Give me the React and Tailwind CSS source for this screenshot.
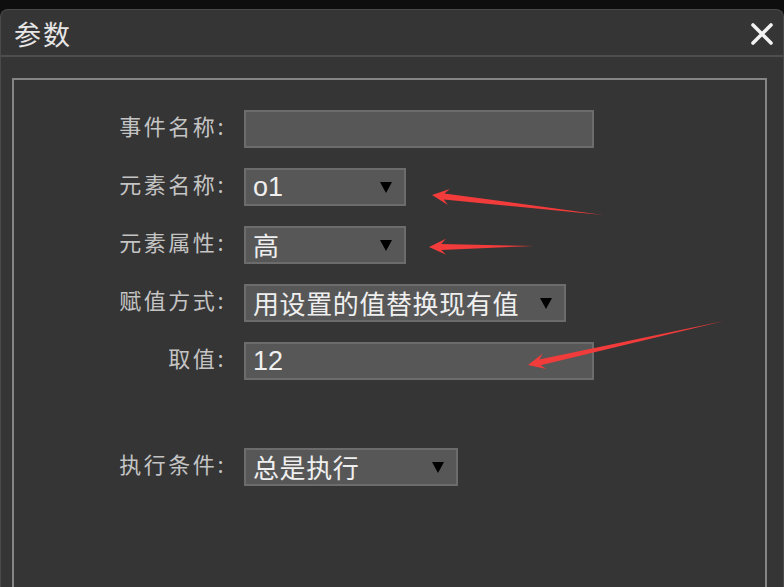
import React from 'react';

const cjk = { fontFamily: '"Noto Sans CJK SC", "Noto Sans", sans-serif' };
const latin = { fontFamily: '"Liberation Sans", "Noto Sans CJK SC", sans-serif' };

// red annotation arrows: tip -> tail
const arrows = [
  { tip: [432, 195], tail: [603, 215] },
  { tip: [429, 247], tail: [534, 246] },
  { tip: [528, 365], tail: [724, 321] },
];

const arrowPoints = ({ tip, tail }) => {
  const dx = tail[0] - tip[0];
  const dy = tail[1] - tip[1];
  const len = Math.hypot(dx, dy);
  const ux = dx / len, uy = dy / len;
  const nx = -uy, ny = ux;
  const L = 17, W = 8, s = 3;
  const p = (a, b) => `${tip[0] + ux * a + nx * b},${tip[1] + uy * a + ny * b}`;
  return [
    `${tip[0]},${tip[1]}`,
    p(L, W),
    p(L * 0.72, s),
    `${tail[0]},${tail[1]}`,
    p(L * 0.72, -s),
    p(L, -W),
  ].join(' ');
};

const Arrow = () => (
  <svg width="12" height="12" viewBox="0 0 12 12" className="shrink-0">
    <polygon points="0,1 12,1 6,12" fill="#000" />
  </svg>
);

const Row = ({ label, children, className = '' }) => (
  <div className={`flex items-start ${className}`}>
    <div
      className="w-[212px] whitespace-nowrap text-right text-[22px] leading-[30px] tracking-[2.5px] text-[#c4c4c4]"
      style={cjk}
    >
      {label}:
    </div>
    <div className="ml-[18px]">{children}</div>
  </div>
);

const Field = ({ width, children, select, latinText }) => (
  <div
    className="h-[38px] flex items-center justify-between border-2 border-[#6c6c6c] bg-[#575757] pl-[7px] pr-[12px] text-[#efefef]"
    style={{ width }}
  >
    <span
      className={
        latinText
          ? 'whitespace-nowrap text-[27px] leading-none'
          : 'whitespace-nowrap text-[26px] leading-none tracking-[0.6px]'
      }
      style={latinText ? latin : cjk}
    >
      {children}
    </span>
    {select && <Arrow />}
  </div>
);

export default function App() {
  return (
    <div className="relative h-[587px] w-[784px] overflow-hidden bg-[#0e0e0e] pt-[9px]">
      <div className="flex h-[578px] flex-col rounded-t-[8px] border border-b-0 border-[#4a4a4a] bg-[#353535]">
        <div className="flex h-[47px] shrink-0 items-center justify-between border-b-2 border-[#4e4e4e] pl-[13px] pr-[9px] pt-[3px]">
          <span className="text-[27px] tracking-[2px] text-[#e6e6e6]" style={cjk}>
            参数
          </span>
          <svg width="24" height="24" viewBox="0 0 24 24">
            <path d="M3 3 L21 21 M21 3 L3 21" stroke="#f2f2f2" strokeWidth="3.6" strokeLinecap="round" />
          </svg>
        </div>
        <div className="flex-1 pl-[11px] pr-[16px] pt-[21px]">
          <div className="h-full border-x-2 border-t-2 border-[#858585] pt-[30px]">
            <div className="flex flex-col gap-[20px]">
              <Row label="事件名称">
                <Field width="350px" />
              </Row>
              <Row label="元素名称">
                <Field width="162px" select latinText>o1</Field>
              </Row>
              <Row label="元素属性">
                <Field width="162px" select>高</Field>
              </Row>
              <Row label="赋值方式">
                <Field width="322px" select>用设置的值替换现有值</Field>
              </Row>
              <Row label="取值">
                <Field width="350px" latinText>12</Field>
              </Row>
              <Row label="执行条件" className="mt-[48px]">
                <Field width="214px" select>总是执行</Field>
              </Row>
            </div>
          </div>
        </div>
      </div>
      <svg className="pointer-events-none absolute left-0 top-0" width="784" height="587">
        {arrows.map((a, i) => (
          <polygon key={i} points={arrowPoints(a)} fill="#f23b3b" />
        ))}
      </svg>
    </div>
  );
}
